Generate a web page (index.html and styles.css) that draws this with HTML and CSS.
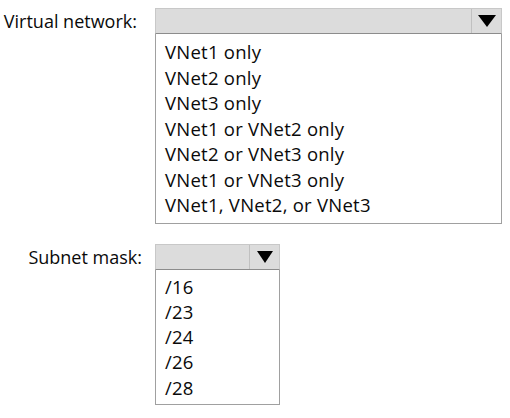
FILE: index.html
```html
<!DOCTYPE html>
<html>
<head>
<meta charset="utf-8">
<link rel="stylesheet" href="styles.css">
</head>
<body>
<div class="page">
  <div class="row">
    <div class="label label-vnet">Virtual network:</div>
    <div class="dropdown dropdown-wide">
      <div class="dd-head">
        <div class="dd-value"></div>
        <div class="dd-btn"><svg width="18" height="12" viewBox="0 0 18 12"><polygon points="0,0 18,0 9,12" fill="#000"/></svg></div>
      </div>
      <ul class="dd-list">
        <li>VNet1 only</li>
        <li>VNet2 only</li>
        <li>VNet3 only</li>
        <li>VNet1 or VNet2 only</li>
        <li>VNet2 or VNet3 only</li>
        <li>VNet1 or VNet3 only</li>
        <li>VNet1, VNet2, or VNet3</li>
      </ul>
    </div>
  </div>
  <div class="row">
    <div class="label label-mask">Subnet mask:</div>
    <div class="dropdown dropdown-narrow">
      <div class="dd-head">
        <div class="dd-value"></div>
        <div class="dd-btn"><svg width="16" height="12" viewBox="0 0 16 12"><polygon points="0,0 16,0 8,12" fill="#000"/></svg></div>
      </div>
      <ul class="dd-list">
        <li>/16</li>
        <li>/23</li>
        <li>/24</li>
        <li>/26</li>
        <li>/28</li>
      </ul>
    </div>
  </div>
</div>
</body>
</html>
```

FILE: styles.css
```css
html, body {
  margin: 0;
  padding: 0;
  background: #fff;
}
body {
  font-family: "Open Sans", "Liberation Sans", sans-serif;
  font-size: 18px;
  color: #0a0a0a;
}
.page {
  padding-top: 8px;
  display: flex;
  flex-direction: column;
  gap: 20px;
}
.row {
  display: flex;
  align-items: flex-start;
}
.label {
  width: 155px;
  box-sizing: border-box;
  height: 26px;
  line-height: 26px;
  text-align: right;
  white-space: nowrap;
}
.label-vnet { padding-right: 18px; }
.label-mask { padding-right: 13px; }
.dropdown {
  box-sizing: border-box;
}
.dropdown-wide { width: 347px; }
.dropdown-narrow { width: 125px; }
.dd-head {
  display: flex;
  height: 26px;
  box-sizing: border-box;
  background: #dcdcdc;
  border: 1px solid #c8c8c8;
  border-bottom: 1px solid #8c8c8c;
}
.dd-value { flex: 1; }
.dd-btn {
  width: 29px;
  border-left: 1px solid #c0c0c0;
  display: flex;
  align-items: center;
  justify-content: center;
}
.dd-list {
  list-style: none;
  margin: 0;
  padding: 5px 0 5px 9px;
  border: 1px solid #a0a0a0;
  border-top: none;
  font-size: 18.5px;
  letter-spacing: 0.25px;
}
.dd-list li {
  line-height: 25.5px;
  white-space: nowrap;
}
.dropdown-narrow .dd-list { padding-top: 4px; padding-bottom: 4px; }
.dropdown-narrow .dd-list li { line-height: 25.3px; }
```
